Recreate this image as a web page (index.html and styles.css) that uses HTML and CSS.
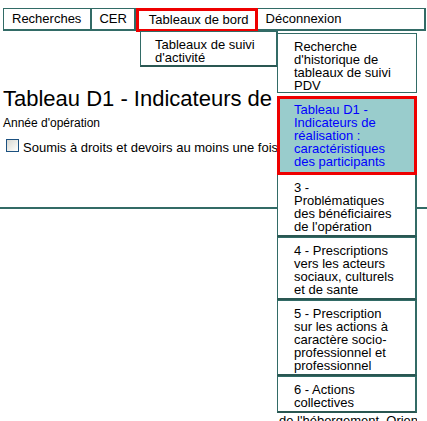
FILE: index.html
```html
<!DOCTYPE html>
<html lang="fr">
<head>
<meta charset="utf-8">
<title>Tableau D1</title>
<link rel="stylesheet" href="styles.css">
</head>
<body>
<nav class="menu">
  <div class="menu-item">Recherches</div>
  <div class="menu-item">CER</div>
  <div class="menu-item menu-item--active">Tableaux de bord</div>
  <div class="menu-item menu-item--grow">Déconnexion</div>
</nav>

<main class="content">
  <h1 class="title">Tableau D1 - Indicateurs de réalisation</h1>
  <p class="year">Année d'opération</p>
  <label class="check-row">
    <input type="checkbox" class="check">
    <span class="check-label">Soumis à droits et devoirs au moins une fois dans l'année</span>
  </label>
</main>

<ul class="submenu">
  <li class="sub-item">Tableaux de suivi d'activité</li>
</ul>

<ul class="subsub">
  <li class="sub-item sub-item--first">Recherche d'historique de tableaux de suivi PDV</li>
  <li class="sub-item sub-item--current">Tableau D1 - Indicateurs de réalisation : caractéristiques des participants</li>
  <li class="sub-item">3 - Problématiques des bénéficiaires de l'opération</li>
  <li class="sub-item">4 - Prescriptions vers les acteurs sociaux, culturels et de sante</li>
  <li class="sub-item">5 - Prescription sur les actions à caractère socio-professionnel et professionnel</li>
  <li class="sub-item">6 - Actions collectives</li>
  <li class="sub-item sub-item--cut">de l'hébergement, Orientation</li>
</ul>
</body>
</html>
```

FILE: styles.css
```css
html, body {
  margin: 0;
  padding: 0;
  background: #ffffff;
}

body {
  font-family: "Liberation Sans", Arial, sans-serif;
  color: #000;
  position: relative;
  width: 427px;
  height: 421px;
  overflow: hidden;
}

.menu {
  display: flex;
  align-items: flex-start;
  margin: 8px 1px 0 3px;
  font-size: 13px;
}

.menu-item {
  box-sizing: border-box;
  height: 23px;
  line-height: 20px;
  padding: 0 9px 0 8px;
  border-top: 1px solid #326b66;
  border-left: 1px solid #326b66;
  border-right: 2px solid #326b66;
  border-bottom: 2px solid #326b66;
  white-space: nowrap;
}

.menu-item + .menu-item {
  border-left: none;
}

.menu-item:nth-child(2) {
  padding: 0 7px 0 7px;
}

.menu-item--active {
  height: 24px;
  line-height: 18px;
  border: 3px solid #ee0000;
  padding: 0 6px 0 10px;
}

.menu-item.menu-item--active {
  border-left: 3px solid #ee0000;
}

.menu-item--grow {
  flex: 1;
  border-left: none;
}

.content {
  padding: 0 3px 52px 3px;
  border-bottom: 2px solid #326b66;
}

.title {
  margin: 54px 0 0 0;
  font-size: 22px;
  font-weight: normal;
  white-space: nowrap;
  line-height: 25px;
  max-width: 274px;
  overflow: hidden;
}

.year {
  margin: 5px 0 0 0;
  font-size: 12px;
  line-height: 14px;
}

.check-row {
  display: flex;
  align-items: flex-start;
  margin-top: 9px;
  font-size: 13px;
  line-height: 15px;
  white-space: nowrap;
}

.check {
  appearance: none;
  -webkit-appearance: none;
  box-sizing: border-box;
  width: 13px;
  height: 13px;
  margin: 0 0 0 3px;
  border: 1px solid #1c5180;
  background: linear-gradient(135deg, #d8d8d2 0%, #f4f4f0 70%, #ffffff 100%);
  flex: none;
}

.check-label {
  margin: 1px 0 0 4px;
}

.submenu,
.subsub {
  list-style: none;
  margin: 0;
  padding: 0;
  position: absolute;
  font-size: 13px;
  line-height: 13px;
  background: #fff;
}

.submenu {
  left: 140px;
  top: 31px;
  width: 138px;
}

.subsub {
  left: 277px;
  top: 33px;
  width: 140px;
}

.sub-item {
  box-sizing: border-box;
  background: #fff;
  padding: 6px 16px 2px 16px;
  border-top: 1px solid #326b66;
  border-left: 1px solid #326b66;
  border-right: 2px solid #326b66;
  border-bottom: 2px solid #2a5752;
}

.submenu .sub-item {
  padding: 6px 16px 1px 14px;
}

.sub-item--first {
  padding: 6px 16px 0 16px;
  border-bottom: 1px solid #326b66;
  border-right: 1px solid #326b66;
  margin-bottom: 3px;
}

.sub-item--current {
  background: #99cccc;
  color: #0000ff;
  border: 3px solid #ee0000;
  padding: 4px 16px 4px 14px;
}

.sub-item--current + .sub-item {
  border-top: none;
  padding-top: 6px;
}

.sub-item--cut {
  border: none;
  padding: 1px 0 0 2px;
  white-space: nowrap;
  overflow: hidden;
  background: transparent;
}
```
